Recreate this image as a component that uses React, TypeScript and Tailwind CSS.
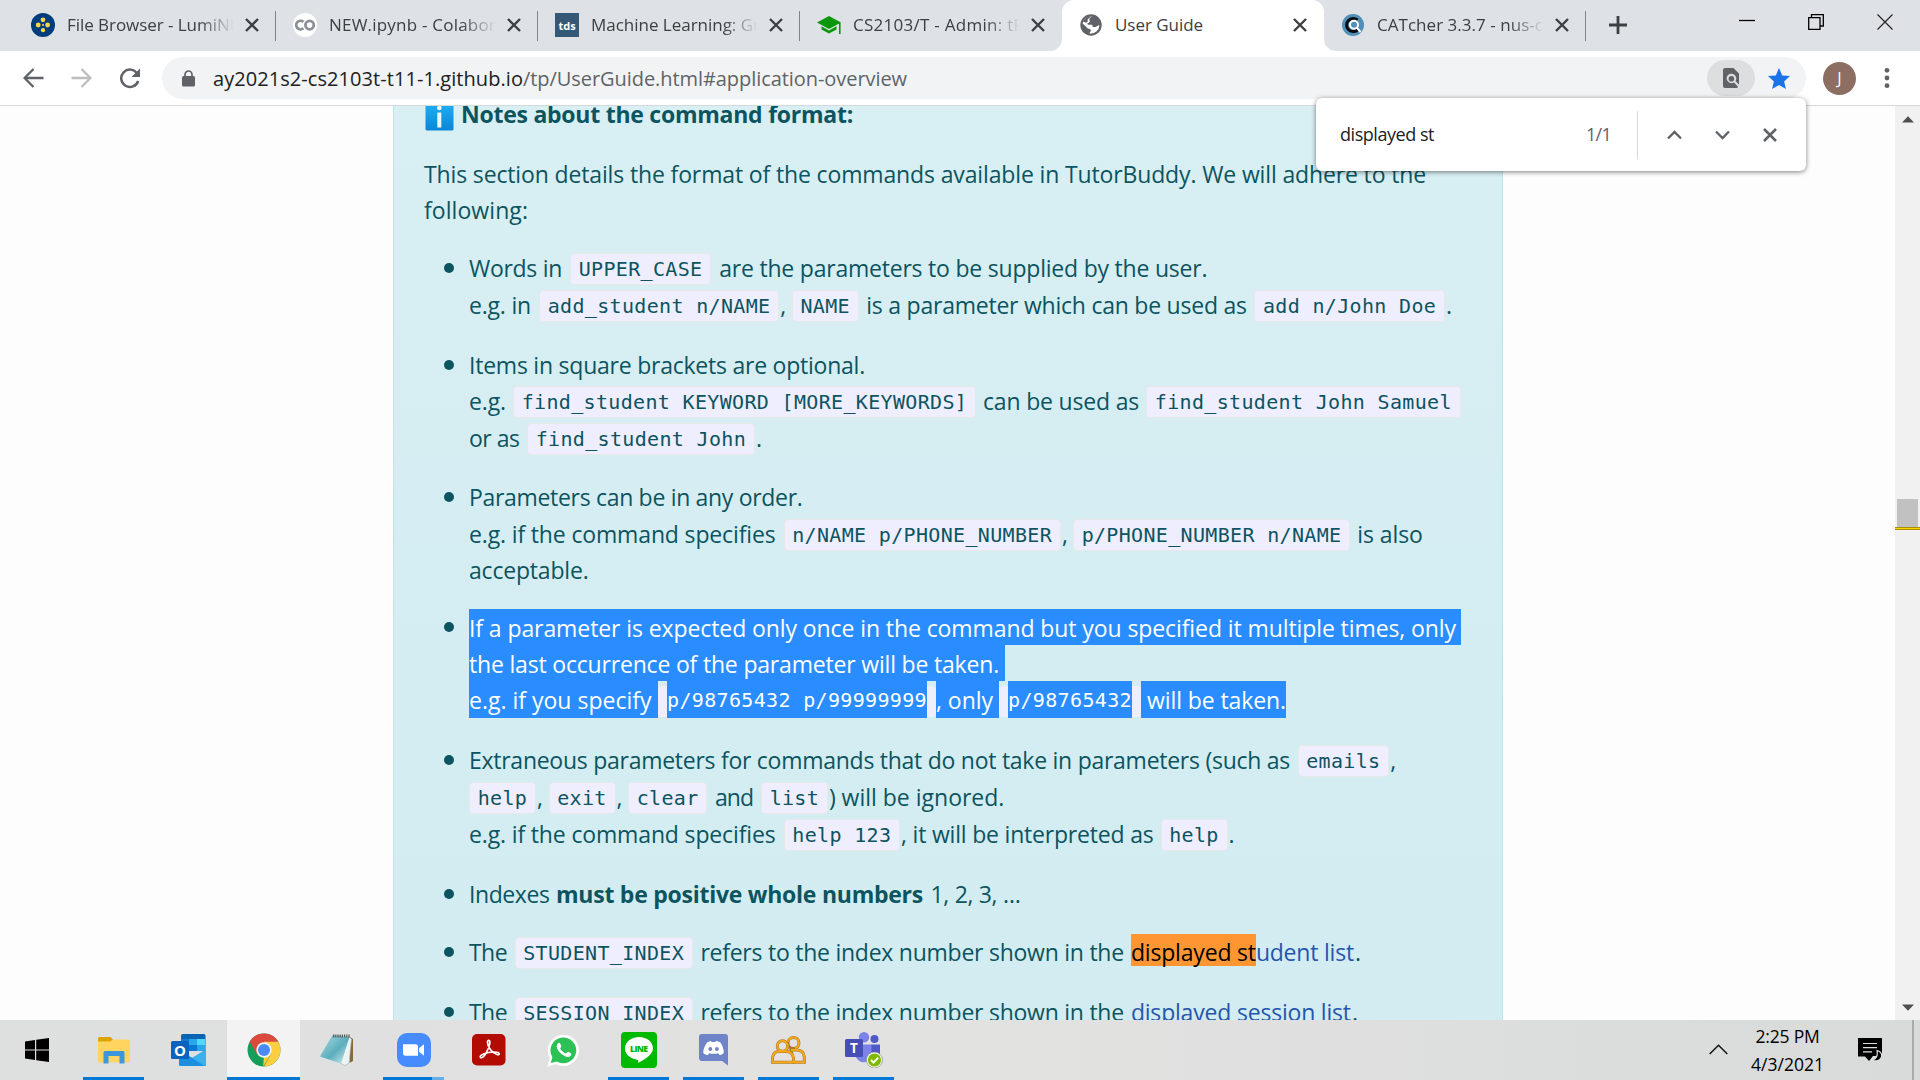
import { useLayoutEffect, useRef, useState, type ReactNode } from "react";

/* Text set to an exact advance width by spreading the difference over its letters. */
function Fit({ w, children, g = 0, className = "" }: { w: number; children: string; g?: number; className?: string }) {
  const ref = useRef<HTMLSpanElement>(null);
  const [ls, setLs] = useState(0);
  useLayoutEffect(() => {
    const el = ref.current;
    if (!el) return;
    const prev = el.style.letterSpacing;
    el.style.letterSpacing = "0px";
    const natural = el.getBoundingClientRect().width;
    el.style.letterSpacing = prev;
    setLs((w - natural) / children.length);
  }, [w, children]);
  return (
    <span className={`block shrink-0 whitespace-pre ${className}`} style={{ width: w, marginLeft: g }}>
      <span ref={ref} style={{ letterSpacing: `${ls}px` }}>{children}</span>
    </span>
  );
}

function Code({ children, g = 8 }: { children: string; g?: number }) {
  const tw = children.length * 12.375;
  return (
    <span
      className="mt-[3px] flex h-8 shrink-0 justify-center rounded-[4px] border border-[#e8e8e8] bg-[#eeeeff] font-['DejaVu_Sans_Mono',monospace] text-[20px] leading-[30px]"
      style={{ width: tw + 17.5, marginLeft: g }}
    >
      <Fit w={tw}>{children}</Fit>
    </span>
  );
}

function Row({ children, tall = false }: { children: ReactNode; tall?: boolean }) {
  return <div className={`flex items-start ${tall ? "h-[37px]" : "h-9"}`}>{children}</div>;
}

function Item({ children, className = "" }: { children: ReactNode; className?: string }) {
  return (
    <li className={`flex ${className}`}>
      <span className="mt-[13px] mr-[15px] ml-[20px] size-[10px] shrink-0 rounded-full bg-[#0c5460]" />
      <div className="shrink-0">{children}</div>
    </li>
  );
}

function Cross({ size, color = "#3c4043", sw = 2.4 }: { size: number; color?: string; sw?: number }) {
  return (
    <svg width={size} height={size} viewBox="0 0 14 14" className="shrink-0">
      <path d="M1 1l12 12M13 1L1 13" stroke={color} strokeWidth={sw} fill="none" />
    </svg>
  );
}

function Tab({ icon, title, w, active, sep }: { icon: ReactNode; title: string; w: number; active?: boolean; sep?: boolean }) {
  return (
    <div className={`relative flex h-[51px] w-[262px] shrink-0 items-center pb-px pl-[17px] ${active ? "rounded-t-[12px] bg-white" : ""}`}>
      {active && (
        <>
          <svg width="12" height="12" className="absolute bottom-0 -left-3"><path d="M12 0V12H0A12 12 0 0 0 12 0Z" fill="#fff" /></svg>
          <svg width="12" height="12" className="absolute -right-3 bottom-0"><path d="M0 0V12H12A12 12 0 0 1 0 0Z" fill="#fff" /></svg>
        </>
      )}
      <span className="flex size-6 items-center justify-center">{icon}</span>
      <div className={`ml-3 w-[167px] overflow-hidden pb-px text-[17px] leading-6 text-[#3c4043] ${active ? "" : "[mask-image:linear-gradient(to_right,#000_132px,transparent_167px)]"}`}>
        <Fit w={w}>{title}</Fit>
      </div>
      <span className="ml-[11px]"><Cross size={14} /></span>
      {sep && <span className="absolute top-[11px] right-0 h-[30px] w-px bg-[#808488]" />}
    </div>
  );
}

const LumiIcon = (
  <svg width="24" height="24" viewBox="0 0 24 24">
    <circle cx="12" cy="12" r="12" fill="#003d7c" />
    <g fill="#ffd54a"><circle cx="12" cy="6.8" r="2.4" /><circle cx="7.2" cy="12" r="2.4" /><circle cx="16.6" cy="12" r="2.4" /><circle cx="12" cy="17.2" r="2.1" /><circle cx="12" cy="12" r="1" /></g>
  </svg>
);
const ColabIcon = (
  <svg width="24" height="24" viewBox="0 0 24 24">
    <circle cx="12" cy="12" r="12" fill="#fff" />
    <path d="M10.4 8.9A4.3 4.3 0 1 0 10.4 15.3" fill="none" stroke="#8a9096" strokeWidth="2.8" />
    <circle cx="16.6" cy="12.1" r="4.2" fill="none" stroke="#8a9096" strokeWidth="2.8" />
  </svg>
);
const TdsIcon = (
  <span className="flex size-6 items-center justify-center bg-[#355876] font-['Open_Sans',sans-serif] text-[11px] leading-none font-bold text-white">tds</span>
);
const CapIcon = (
  <svg width="24" height="20" viewBox="0 0 24 20">
    <path d="M12 1L0 7.5 12 14 24 7.5Z" fill="#0b960b" />
    <path d="M4.5 11.3V14.5L12 18.5 19.5 14.5V11.3L12 15.4Z" fill="#0b960b" />
    <path d="M22.8 8V19" stroke="#0b960b" strokeWidth="1.6" />
  </svg>
);
const GlobeIcon = (
  <svg width="22" height="22" viewBox="0 0 22 22">
    <circle cx="11" cy="11" r="10.7" fill="#5f6368" />
    <path d="M12.300 2.500C9.500 3.500 8.600 5.400 9.600 6.600 10.400 7.600 9.200 9 7.800 9.200 6.800 9.400 7.300 10.700 8.500 10.700H11.200C12.800 10.700 13 12.200 12.400 13H15.400C16.600 13 17 11.500 19.500 11.300A8.700 8.700 0 0 1 9.600 19.500C9.600 17.800 11.600 17.500 10.600 15.800 9.800 14.600 7.800 15 7 13.800 6 12.200 4.400 11.700 2.500 9.500A8.700 8.700 0 0 1 12.300 2.500Z" fill="#fff" />
    <path d="M12.300 2.500A8.700 8.700 0 0 0 3.200 7.400L5.500 8.600C7.500 8.600 8 7.400 7.600 6.400 7.200 4.800 9.600 3.400 12.300 2.500Z" fill="#5f6368" />
  </svg>
);
const CatIcon = (
  <svg width="22" height="22" viewBox="0 0 22 22">
    <circle cx="11" cy="11" r="11" fill="#4f8fb8" />
    <path d="M15.5 6A6.6 6.6 0 1 0 15.5 16" fill="none" stroke="#0a0a0a" strokeWidth="3" />
    <circle cx="12" cy="10.8" r="4" fill="none" stroke="#fff" strokeWidth="2" />
    <path d="M14.5 13.4L18.6 18" stroke="#fff" strokeWidth="2" />
  </svg>
);

function Slot({ children, bar = false, active = false }: { children: ReactNode; bar?: boolean; active?: boolean }) {
  return (
    <div className="flex h-full w-[75px] shrink-0 flex-col items-center">
      <div className={`flex h-[57px] items-center justify-center pt-[3px] ${active ? "w-[73px] bg-[#f3f3f3]" : "w-full"}`}>{children}</div>
      {bar && <div className={`h-[3px] bg-[#0078d7] ${active ? "w-[73px]" : "w-[61px]"}`} />}
    </div>
  );
}

function Taskbar() {
  return (
    <footer className="flex h-[60px] shrink-0 bg-linear-to-r from-[#dedfdf] via-[#e2e2e1] to-[#d8dbda] pl-px">
      <Slot>
        <svg width="24" height="24" viewBox="0 0 24 24" className="mr-1">
          <path d="M0 3.4L10 2V11.4H0ZM11.2 1.8L24 0V11.4H11.2ZM0 12.6H10V22L0 20.6ZM11.2 12.6H24V24L11.2 22.2Z" fill="#000" />
        </svg>
      </Slot>
      <Slot bar>
        <svg width="32" height="27" viewBox="0 0 32 27">
          <path d="M0 1.5Q0 0 1.500 0H12.500L15 2.500V6H0Z" fill="#e0a200" />
          <path d="M0 4.500H12L15 2.600H30.500Q32 2.600 32 4V24Q32 25.500 30.500 25.500H1.500Q0 25.500 0 24Z" fill="#ffd560" />
          <path d="M5.500 26.500V15.500Q5.500 14 7 14H25Q26.500 14 26.500 15.500V26.500H21.500V19H10.500V26.500Z" fill="#3b97dc" />
        </svg>
      </Slot>
      <Slot>
        <svg width="35" height="32" viewBox="0 0 35 32">
          <path d="M10 1.500Q10 0 11.500 0H33Q34.500 0 34.500 1.500V16H10Z" fill="#0a64b4" />
          <path d="M10 5H18V17H10Z" fill="#1279cf" /><path d="M18 5H26V11H18Z" fill="#28a8ea" /><path d="M26 5H34V11H26Z" fill="#50d9ff" />
          <path d="M18 11H26V17H18Z" fill="#0a78d4" /><path d="M26 11H34V17H26Z" fill="#28a8ea" />
          <path d="M8 16L21.500 24 35 15.500V30.500Q35 32 33.500 32H9.500Q8 32 8 30.500Z" fill="#1b8fdf" />
          <path d="M35 15.500L21 24 33.500 32Q35 32 35 30.500Z" fill="#37b1f0" />
          <rect y="7" width="18" height="18" rx="1.500" fill="#0b62bf" />
          <text x="9" y="21.500" textAnchor="middle" fontFamily="Open Sans" fontWeight="700" fontSize="15" fill="#fff">O</text>
        </svg>
      </Slot>
      <Slot bar active>
        <svg width="34" height="34" viewBox="0 0 34 34">
          <circle cx="17" cy="17" r="16.500" fill="#149e5a" />
          <path d="M2.700 8.750A16.500 16.500 0 0 1 31.300 8.750L17 9.500 9.850 21.100Z" fill="#dc4a3d" />
          <path d="M31.300 8.750A16.500 16.500 0 0 1 17 33.500L24.200 21.100 17 8.750Z" fill="#ffcd40" />
          <path d="M16.200 33.500L24.200 21.100H17Z" fill="#ffcd40" />
          <circle cx="17" cy="17" r="7.700" fill="#f4f4f4" /><circle cx="17" cy="17" r="6" fill="#4a8af4" />
        </svg>
      </Slot>
      <Slot>
        <svg width="34" height="32" viewBox="0 0 34 32" className="mr-1">
          <defs><linearGradient id="pad" x1="0" y1="0" x2="1" y2="1"><stop offset="0" stopColor="#a9dbe2" /><stop offset=".55" stopColor="#5caebd" /><stop offset="1" stopColor="#d8f2f5" /></linearGradient></defs>
          <path d="M30 3L33 5V27L29.500 29Z" fill="#8a6a34" />
          <path d="M29 3L31.500 5L29 29 25 31.500 20 29Z" fill="#eef3f4" stroke="#9fb0b4" strokeWidth=".6" />
          <path d="M12.500 1L29.500 3 21 29.500 0 22.500Z" fill="url(#pad)" />
          <path d="M13 2H30" stroke="#555" strokeWidth="3" strokeDasharray="1.200 1" />
        </svg>
      </Slot>
      <div className="flex h-full w-[75px] shrink-0 flex-col items-center">
        <div className="flex h-[57px] items-center pt-[3px]">
          <svg width="34" height="34" viewBox="0 0 34 34">
            <rect width="34" height="34" rx="10" fill="#468cff" />
            <path d="M6 11.200H18.500Q21 11.200 21 13.700V22.800H8.500Q6 22.800 6 20.300ZM22 15.200L27 11.200V22.800L22 18.800Z" fill="#fff" />
          </svg>
        </div>
        <div className="flex h-[3px] w-[61px]"><span className="w-[49px] bg-[#0078d7]" /><span className="w-3 bg-[#66aee7]" /></div>
      </div>
      <Slot>
        <svg width="34" height="32" viewBox="0 0 34 32">
          <rect width="33.500" height="31.500" rx="5" fill="#b30b00" />
          <path d="M8.500 23.500C6.500 21.500 14 18 22 18 29 18 28 21.500 25 20.500 20 19 15.500 12.500 15.500 8.500 15.500 5.500 18.300 5.500 17.800 9.500 17 15 11.500 25.500 8.500 23.500Z" fill="none" stroke="#fff" strokeWidth="1.700" />
        </svg>
      </Slot>
      <Slot>
        <svg width="33" height="33" viewBox="0 0 33 33">
          <path d="M.5 32.500L2.800 24A15.600 15.600 0 1 1 8.800 30Z" fill="#fff" />
          <path d="M3.800 29L5.400 23.200A12.900 12.900 0 1 1 9.800 27.500Z" fill="#2bc155" />
          <path d="M11.200 9.200C12 8.400 13 8.800 13.300 9.700L14.300 12C14.500 12.700 13.300 14 13.300 14.400 14.500 16.700 16.600 18.500 19 19.400 19.600 19.200 20.600 17.600 21.200 17.800L24 19.200C24.800 19.600 24.200 21.600 22.800 22.500 20.800 23.600 17.500 22.500 14.800 20.300 12 18 9.800 15 9.700 12.500 9.700 11 10.400 9.900 11.200 9.200Z" fill="#fff" />
        </svg>
      </Slot>
      <Slot bar>
        <svg width="36" height="36" viewBox="0 0 36 36">
          <rect width="36" height="36" rx="4" fill="#00b900" />
          <path d="M18 5C10 5 4 10 4 16.500 4 22 9 26.500 16 27.700 17.300 28 17.500 28.500 17 31 21 29 32 23 32 16.500 32 10 26 5 18 5Z" fill="#fff" />
          <text x="18" y="20" textAnchor="middle" fontFamily="Open Sans" fontWeight="800" fontSize="8.600" textLength="18" fill="#00b900">LINE</text>
        </svg>
      </Slot>
      <Slot bar>
        <svg width="30" height="32" viewBox="0 0 30 32">
          <path d="M3 0H26Q29 0 29 3V31.500L23 27H3Q0 27 0 24V3Q0 0 3 0Z" fill="#6f83c8" />
          <path d="M8 8.500C10 7 12 7 12 7L12.600 8H16.400L17 7C17 7 19 7 21.500 8.500 24 12.500 25 16 24.700 19 23.500 20.500 21.500 21 20.500 21L19.300 19.300C17 20 12.500 20 10 19.300L9 21C7.500 21 5.500 20.500 4.300 19 4 16 5.500 12 8 8.500Z" fill="#fff" />
          <circle cx="11.300" cy="15" r="1.900" fill="#6f83c8" /><circle cx="17.900" cy="15" r="1.900" fill="#6f83c8" />
        </svg>
      </Slot>
      <Slot bar>
        <svg width="35" height="28" viewBox="0 0 35 28" fill="#e3e2e1" stroke="#a87a28" strokeWidth="3">
          <g>
            <circle cx="22.500" cy="7" r="5.500" />
            <path d="M22 26.300H33.300V21Q33 14.500 26 14H20Z" />
            <path d="M1.500 26.300V22Q2 15.500 8 15.500H15Q21.500 15.500 22.500 22V26.300Z" />
            <circle cx="11.500" cy="10" r="5.200" />
          </g>
          <g fill="none" stroke="#f5a81c" strokeWidth="1.900">
            <path d="M17 6A5.500 5.500 0 1 1 24 12.300" />
            <path d="M22.500 26.300H33.300V21Q33 14.500 26 14H20" />
            <path d="M1.500 26.300V22Q2 15.500 8 15.500H15Q21.500 15.500 22.500 22V26.300Z" />
            <circle cx="11.500" cy="10" r="5.200" />
          </g>
        </svg>
      </Slot>
      <Slot bar>
        <svg width="38" height="36" viewBox="0 0 38 36">
          <circle cx="29.500" cy="7" r="4" fill="#5059c9" /><circle cx="19" cy="5.200" r="5.200" fill="#7b83eb" />
          <path d="M26 12.500H35V23A6 6 0 0 1 26 27Z" fill="#5059c9" />
          <path d="M11 12.500H26.500V23A8 8 0 0 1 11 25Z" fill="#7b83eb" />
          <rect y="7" width="18" height="18" rx="1.500" fill="#464eb8" />
          <text x="9" y="21" textAnchor="middle" fontFamily="Open Sans" fontWeight="700" fontSize="13.500" fill="#fff">T</text>
          <circle cx="29.500" cy="28" r="8" fill="#fff" stroke="#777" strokeWidth=".6" /><circle cx="29.500" cy="28" r="6.600" fill="#7fba00" />
          <path d="M26 28L28.600 30.700 33.200 25.700" fill="none" stroke="#fff" strokeWidth="1.900" />
        </svg>
      </Slot>
      <div className="ml-auto flex items-center">
        <svg width="19" height="11" viewBox="0 0 19 11" className="mr-[23px] mb-[2px]"><path d="M.7 10L9.500 1.200 18.300 10" fill="none" stroke="#111" strokeWidth="1.500" /></svg>
        <div className="flex w-[73px] flex-col items-center text-[17.500px] leading-[28px] text-black">
          <Fit w={64}>2:25 PM</Fit>
          <Fit w={73}>4/3/2021</Fit>
        </div>
        <svg width="25" height="25" viewBox="0 0 25 25" className="mr-[29px] ml-[34px]">
          <path d="M0 0H24V18H15L11 23 7 18.500H0Z" fill="#000" />
          <path d="M5 5.500H19M5 9.700H19M5 13.900H14" stroke="#dcdedd" strokeWidth="1.200" />
          <path d="M19 12.500Q24.500 14 23.500 19 21 24.500 14.500 22.300 20.500 20 19 12.500Z" fill="#000" stroke="#dcdedd" strokeWidth="1.200" />
        </svg>
        <span className="mr-[6px] h-[60px] w-[2px] bg-[#a9acab]" />
      </div>
    </footer>
  );
}

function Notes() {
  const only = "shrink-0 bg-[#298dff] text-white";
  return (
    <section className="h-[940px] w-[1110px] shrink-0 border-x border-[#bee5eb] bg-linear-to-b from-[#d8eff3] to-[#d2ecf1] pl-[30px] text-[23px] leading-9 text-[#0c5460]">
      <div className="-mt-[10px] flex h-9">
        <svg width="29" height="29" viewBox="0 0 29 29" className="mt-[6px] ml-px">
          <defs><linearGradient id="info" x1="0" y1="0" x2="0" y2="1"><stop offset="0" stopColor="#1fb0f4" /><stop offset="1" stopColor="#0a86d8" /></linearGradient></defs>
          <rect x=".5" y=".5" width="28" height="28" rx="1.500" fill="url(#info)" />
          <circle cx="14.300" cy="6" r="2.300" fill="#eaf7fe" /><rect x="12.300" y="10.500" width="4" height="15" rx=".5" fill="#eaf7fe" />
        </svg>
        <Fit w={392} g={7} className="font-bold">Notes about the command format:</Fit>
      </div>
      <div className="mt-6 h-9"><Fit w={1002}>This section details the format of the commands available in TutorBuddy. We will adhere to the</Fit></div>
      <div className="h-9"><Fit w={104}>following:</Fit></div>
      <ul className="mt-[22px]">
        <Item>
          <Row tall><Fit w={93}>Words in</Fit><Code g={8}>UPPER_CASE</Code><Fit g={8} w={488}>are the parameters to be supplied by the user.</Fit></Row>
          <Row><Fit w={62}>e.g. in</Fit><Code g={8}>add_student n/NAME</Code><Fit g={1} w={5}>,</Fit><Code g={6.500}>NAME</Code><Fit g={7.500} w={380.500}>is a parameter which can be used as</Fit><Code g={7.500}>add n/John Doe</Code><Fit g={1} w={5}>.</Fit></Row>
        </Item>
        <Item className="mt-6">
          <Row><Fit w={396}>Items in square brackets are optional.</Fit></Row>
          <Row tall><Fit w={37}>e.g.</Fit><Code g={7}>find_student KEYWORD [MORE_KEYWORDS]</Code><Fit g={7} w={156}>can be used as</Fit><Code g={7}>find_student John Samuel</Code></Row>
          <Row><Fit w={50.500}>or as</Fit><Code g={7.500}>find_student John</Code><Fit g={1} w={5}>.</Fit></Row>
        </Item>
        <Item className="mt-[23px]">
          <Row tall><Fit w={333.500}>Parameters can be in any order.</Fit></Row>
          <Row><Fit w={306.500}>e.g. if the command specifies</Fit><Code g={8}>n/NAME p/PHONE_NUMBER</Code><Fit g={1} w={5}>,</Fit><Code g={6}>p/PHONE_NUMBER n/NAME</Code><Fit g={7} w={65.500}>is also</Fit></Row>
          <Row><Fit w={119.500}>acceptable.</Fit></Row>
        </Item>
        <Item className="mt-[21px] leading-[38px] font-medium">
          <div className={`h-9 w-[992px] ${only}`}><Fit w={987}>If a parameter is expected only once in the command but you specified it multiple times, only</Fit></div>
          <div className={`h-9 w-[536px] ${only}`}><Fit w={530}>the last occurrence of the parameter will be taken.</Fit></div>
          <div className="flex h-[37px] text-white">
            <div className={`w-[189px] ${only}`}><Fit w={182.500}>e.g. if you specify</Fit></div>
            <div className="mt-[5px] h-[31px] w-[9px] rounded-l-[4px] bg-[#eeeeff]" />
            <div className={`w-[260px] font-['DejaVu_Sans_Mono',monospace] text-[20px] ${only}`}><Fit w={260}>p/98765432 p/99999999</Fit></div>
            <div className="mt-[5px] h-[31px] w-[9px] rounded-r-[4px] bg-[#eeeeff]" />
            <div className={`w-[63px] ${only}`}><Fit w={57}>, only</Fit></div>
            <div className="mt-[5px] h-[31px] w-[9px] rounded-l-[4px] bg-[#eeeeff]" />
            <div className={`w-[124px] font-['DejaVu_Sans_Mono',monospace] text-[20px] ${only}`}><Fit w={124}>p/98765432</Fit></div>
            <div className="mt-[5px] h-[31px] w-[9px] rounded-r-[4px] bg-[#eeeeff]" />
            <div className={`w-[145px] ${only}`}><Fit g={6} w={139}>will be taken.</Fit></div>
          </div>
        </Item>
        <Item className="mt-6">
          <Row tall><Fit w={821}>Extraneous parameters for commands that do not take in parameters (such as</Fit><Code g={7.500}>emails</Code><Fit g={1} w={5}>,</Fit></Row>
          <Row tall><Code g={0}>help</Code><Fit g={1} w={5}>,</Fit><Code g={6.500}>exit</Code><Fit g={1} w={5}>,</Fit><Code g={6.500}>clear</Code><Fit g={7.500} w={38.500}>and</Fit><Code g={7.500}>list</Code><Fit g={1} w={175.500}>) will be ignored.</Fit></Row>
          <Row tall><Fit w={306.500}>e.g. if the command specifies</Fit><Code g={8}>help 123</Code><Fit g={1} w={252.500}>, it will be interpreted as</Fit><Code g={7}>help</Code><Fit g={1} w={5}>.</Fit></Row>
        </Item>
        <Item className="mt-[23px]">
          <Row><Fit w={80.500}>Indexes</Fit><Fit g={6.500} w={367} className="font-bold">must be positive whole numbers</Fit><Fit g={7.500} w={90}>1, 2, 3, …</Fit></Row>
        </Item>
        <Item className="mt-[22px]">
          <Row><Fit w={38}>The</Fit><Code g={7.500}>STUDENT_INDEX</Code><Fit g={7.500} w={423.500}>refers to the index number shown in the</Fit><span className="ml-[7px] block h-8 w-[125px] bg-[#ff9632] leading-[36px] text-black"><Fit w={125}>displayed st</Fit></span><Fit w={98} className="text-[#2556ad]">udent list</Fit><Fit g={1} w={5}>.</Fit></Row>
        </Item>
        <Item className="mt-6">
          <Row><Fit w={38}>The</Fit><Code g={7.500}>SESSION_INDEX</Code><Fit g={7.500} w={423.500}>refers to the index number shown in the</Fit><Fit g={7} w={220} className="text-[#2556ad]">displayed session list</Fit><Fit g={1} w={5}>.</Fit></Row>
        </Item>
      </ul>
    </section>
  );
}

export default function App() {
  return (
    <div className="relative flex h-[1080px] w-[1920px] flex-col overflow-hidden bg-[#fdfdfd] font-['Open_Sans',sans-serif]">
      <header className="flex h-[51px] shrink-0 bg-[#dee1e6] pl-[14px]">
        <Tab icon={LumiIcon} title="File Browser - LumiNU" w={175} sep />
        <Tab icon={ColabIcon} title="NEW.ipynb - Colabor" w={167} sep />
        <Tab icon={TdsIcon} title="Machine Learning: Gr" w={169} sep />
        <Tab icon={CapIcon} title="CS2103/T - Admin: tP" w={171} />
        <Tab icon={GlobeIcon} title="User Guide" w={88} active />
        <Tab icon={CatIcon} title="CATcher 3.3.7 - nus-c" w={166} sep />
        <svg width="18" height="18" viewBox="0 0 18 18" className="mt-4 ml-[23px]"><path d="M9 0V18M0 9H18" stroke="#3c4043" strokeWidth="2.800" /></svg>
        <div className="mt-[14px] mr-[27px] ml-auto flex gap-[53px]">
          <svg width="16" height="16"><path d="M0 6.500H16" stroke="#000" strokeWidth="1.300" /></svg>
          <svg width="16" height="16" fill="none" stroke="#000" strokeWidth="1.300"><path d="M.7 3.700H12V15.300H.7ZM3.500 3.500V.7H15.300V12H12.200" /></svg>
          <svg width="16" height="16"><path d="M.5 .5L15.500 15.500M15.500 .5L.5 15.500" stroke="#222" strokeWidth="1.200" /></svg>
        </div>
      </header>
      <nav className="flex h-[55px] shrink-0 items-center border-b border-[#d6d8db] bg-white pl-[23px]">
        <svg width="21" height="20" viewBox="0 0 21 20" fill="none" stroke="#5f6368" strokeWidth="2.300"><path d="M20.500 10H2M10.500 1L1.600 10 10.500 19" /></svg>
        <svg width="21" height="20" viewBox="0 0 21 20" fill="none" stroke="#bbbdbf" strokeWidth="2.300" className="ml-[27px]"><path d="M.5 10H19M10.500 1L19.400 10 10.500 19" /></svg>
        <svg width="22" height="21" viewBox="0 0 22 21" className="ml-[27px]"><path d="M18.200 5.500A8.700 8.700 0 1 0 19.200 13" fill="none" stroke="#5f6368" strokeWidth="2.500" /><path d="M21 .5V9H12.500Z" fill="#5f6368" /></svg>
        <div className="ml-[21px] flex h-[42px] w-[1644px] items-center rounded-full bg-[#f1f3f4] pl-[20px]">
          <svg width="13" height="17" viewBox="0 0 13 17"><rect y="6" width="13" height="10.500" rx="1.500" fill="#5f6368" /><path d="M3 6.500V4.500A3.500 3.500 0 0 1 10 4.500V6.500" fill="none" stroke="#5f6368" strokeWidth="1.700" /></svg>
          <div className="ml-[18px] flex pt-[2px] text-[20px] leading-[26px] text-[#202124]">
            <Fit w={310}>ay2021s2-cs2103t-t11-1.github.io</Fit>
            <Fit w={384} className="text-[#5f6368]">/tp/UserGuide.html#application-overview</Fit>
          </div>
          <span className="ml-auto flex h-9 w-12 items-center justify-center rounded-full bg-[#dcdee0]">
            <svg width="16" height="20" viewBox="0 0 16 20"><path d="M2 0H10.500L16 5.500V16.500L12.500 13A4.800 4.800 0 1 0 11 14.500L15 18.800Q14.500 20 13.500 20H2Q0 20 0 18V2Q0 0 2 0Z" fill="#5f6368" /><circle cx="8.400" cy="10.800" r="2.800" fill="#5f6368" /></svg>
          </span>
          <svg width="22" height="21" viewBox="0 0 22 21" className="mr-4 ml-[13px]"><path d="M11 0L14.200 7.500 22 8.100 16.100 13.400 17.900 21 11 16.900 4.100 21 5.900 13.400 0 8.100 7.800 7.500Z" fill="#1a73e8" /></svg>
        </div>
        <span className="ml-[17px] flex size-[33px] shrink-0 items-center justify-center rounded-full bg-[#8d6e63] text-[16px] leading-none text-white">J</span>
        <svg width="6" height="22" viewBox="0 0 6 22" className="ml-7"><g fill="#5f6368"><circle cx="3" cy="3.300" r="2.400" /><circle cx="3" cy="11" r="2.400" /><circle cx="3" cy="18.700" r="2.400" /></g></svg>
      </nav>
      <main className="flex h-[914px] shrink-0 overflow-hidden pl-[393px]">
        <Notes />
        <div className="ml-auto flex w-[25px] flex-col items-center bg-[#f1f1f1]">
          <svg width="12" height="7" className="mt-[10px]"><path d="M0 6.500L6 .3 12 6.500Z" fill="#505050" /></svg>
          <div className="mt-[376px] h-7 w-[21px] bg-[#c1c1c1]" />
          <div className="h-[3px] w-full border-y border-[#a98f00] bg-[#ffd500]" />
          <svg width="12" height="7" className="mt-auto mb-[9px]"><path d="M0 .5L6 6.700 12 .5Z" fill="#505050" /></svg>
        </div>
      </main>
      <Taskbar />
      <div className="absolute top-[98px] left-[1316px] flex h-[73px] w-[490px] items-center rounded-[6px] bg-white pl-6 text-[18px] text-[#202124] shadow-[0_1px_5px_rgba(0,0,0,0.5)]">
        <Fit w={94}>displayed st</Fit>
        <Fit w={25} g={152} className="text-[#5f6368]">1/1</Fit>
        <span className="ml-[26px] h-12 w-px bg-[#d5d7da]" />
        <svg width="15" height="10" viewBox="0 0 15 10" className="ml-[29px]"><path d="M1 8.500L7.500 2 14 8.500" fill="none" stroke="#5f6368" strokeWidth="2.300" /></svg>
        <svg width="15" height="10" viewBox="0 0 15 10" className="ml-[33px]"><path d="M1 1.500L7.500 8 14 1.500" fill="none" stroke="#5f6368" strokeWidth="2.300" /></svg>
        <span className="ml-[33px]"><Cross size={14} color="#5f6368" sw={2.600} /></span>
      </div>
    </div>
  );
}
